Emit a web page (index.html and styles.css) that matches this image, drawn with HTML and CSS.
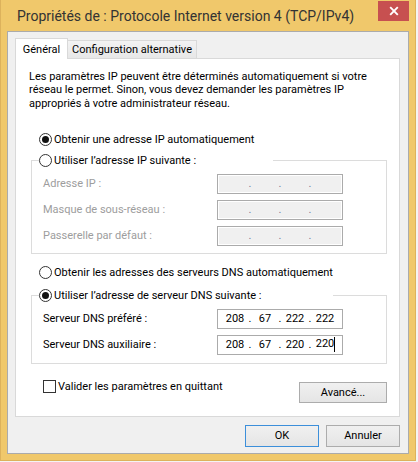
FILE: index.html
```html
<!DOCTYPE html>
<html lang="fr">
<head>
    <meta charset="UTF-8">
    <title>Propriétés de : Protocole Internet version 4 (TCP/IPv4)</title>
    <link rel="stylesheet" href="styles.css">
</head>
<body>

<div class="window">
    <div class="titlebar">
        <span class="title">Propriétés de : Protocole Internet version 4 (TCP/IPv4)</span>
        <button class="close-btn" aria-label="Fermer">
            <svg width="10" height="10" viewBox="0 0 10 10">
                <path d="M1.2 1.2 L8.8 8.8 M8.8 1.2 L1.2 8.8" stroke="#fff" stroke-width="1.9" fill="none"/>
            </svg>
        </button>
    </div>

    <div class="client">
        <div class="tabs">
            <div class="tab active">Général</div>
            <div class="tab">Configuration alternative</div>
        </div>

        <div class="tab-panel">
            <p class="intro">
                Les paramètres IP peuvent être déterminés automatiquement si votre<br>
                réseau le permet. Sinon, vous devez demander les paramètres IP<br>
                appropriés à votre administrateur réseau.
            </p>

            <label class="radio checked standalone first"><span class="radio-mark"></span>Obtenir une adresse IP automatiquement</label>

            <!-- adresse IP manuelle (désactivée) -->
            <fieldset class="group group-ip">
                <legend class="legend-ip"><label class="radio"><span class="radio-mark"></span>Utiliser l’adresse IP suivante :</label></legend>
                <div class="field-grid">
                    <span class="field-label disabled">Adresse IP :</span>
                    <div class="ip-box disabled">
                        <span class="seg"></span><span class="dot">.</span><span class="seg"></span><span class="dot">.</span><span class="seg"></span><span class="dot">.</span><span class="seg"></span>
                    </div>
                    <span class="field-label disabled">Masque de sous-réseau :</span>
                    <div class="ip-box disabled">
                        <span class="seg"></span><span class="dot">.</span><span class="seg"></span><span class="dot">.</span><span class="seg"></span><span class="dot">.</span><span class="seg"></span>
                    </div>
                    <span class="field-label disabled">Passerelle par défaut :</span>
                    <div class="ip-box disabled">
                        <span class="seg"></span><span class="dot">.</span><span class="seg"></span><span class="dot">.</span><span class="seg"></span><span class="dot">.</span><span class="seg"></span>
                    </div>
                </div>
            </fieldset>

            <label class="radio standalone dns-auto"><span class="radio-mark"></span>Obtenir les adresses des serveurs DNS automatiquement</label>

            <fieldset class="group group-dns">
                <legend class="legend-dns"><label class="radio checked"><span class="radio-mark"></span>Utiliser l’adresse de serveur DNS suivante :</label></legend>
                <div class="field-grid">
                    <span class="field-label">Serveur DNS préféré :</span>
                    <div class="ip-box">
                        <span class="seg">208</span><span class="dot">.</span><span class="seg">67</span><span class="dot">.</span><span class="seg">222</span><span class="dot">.</span><span class="seg">222</span>
                    </div>
                    <span class="field-label">Serveur DNS auxiliaire :</span>
                    <div class="ip-box">
                        <span class="seg">208</span><span class="dot">.</span><span class="seg">67</span><span class="dot">.</span><span class="seg">220</span><span class="dot">.</span><span class="seg">220<span class="caret"></span></span>
                    </div>
                </div>
            </fieldset>

            <div class="bottom-row">
                <label class="checkbox"><span class="check-mark"></span>Valider les paramètres en quittant</label>
                <button class="btn btn-advanced">Avancé...</button>
            </div>
        </div>

        <div class="dialog-buttons">
            <button class="btn btn-default">OK</button>
            <button class="btn">Annuler</button>
        </div>
    </div>
</div>

</body>
</html>
```

FILE: styles.css
```css
body {
    margin: 0;
    background-color: #f4f4f4;
    font-family: Roboto, "Noto Sans", sans-serif;
    font-size: 11px;
    color: #000;
}

.window {
    width: 416px;
    height: 461px;
    box-sizing: border-box;
    background-color: #f0c86b;
    border: 1px solid #ddb25c;
    border-top: 0;
    padding: 0 6px 6px;
    display: flex;
    flex-direction: column;
}

/* barre de titre */
.titlebar {
    height: 31px;
    display: flex;
    align-items: flex-start;
}

.title {
    flex: 1;
    padding: 8px 0 0 10px;
    font-size: 14px;
    line-height: 17px;
    color: #333;
    white-space: nowrap;
}

.close-btn {
    width: 31px;
    height: 20px;
    margin-top: 1px;
    padding: 0;
    border: none;
    background-color: #c75050;
    display: flex;
    align-items: center;
    justify-content: center;
}

.client {
    flex: 1;
    background-color: #f0f0f0;
    border: 1px solid #ababab;
    padding: 6px 8px 6px 7px;
    display: flex;
    flex-direction: column;
}

/* onglets */
.tabs {
    height: 20px;
    display: flex;
    align-items: flex-end;
}

.tab {
    width: 130px;
    height: 18px;
    box-sizing: border-box;
    margin-left: -1px;
    border: 1px solid #d9d9d9;
    border-bottom: none;
    background: linear-gradient(#f3f3f3, #e7e7e7);
    display: flex;
    align-items: center;
    justify-content: center;
    white-space: nowrap;
}

.tab.active {
    width: 53px;
    height: 21px;
    margin-left: 0;
    margin-bottom: -1px;
    background: #fff;
    position: relative;
    z-index: 1;
}

.tab-panel {
    background-color: #fff;
    border: 1px solid #d9d9d9;
    padding: 11px 12px 13px 13px;
    display: flex;
    flex-direction: column;
}

.intro {
    margin: 0;
    line-height: 13.3px;
    white-space: nowrap;
}

/* boutons radio et case à cocher */
.radio, .checkbox {
    height: 16px;
    display: flex;
    align-items: center;
    gap: 2px;
    white-space: nowrap;
}

.radio.standalone {
    margin-left: 10px;
    align-self: flex-start;
}

.radio.first {
    margin-top: 22px;
}

.radio.dns-auto {
    margin-top: 11px;
}

.radio-mark {
    width: 13px;
    height: 13px;
    box-sizing: border-box;
    border: 1px solid #333;
    border-radius: 50%;
    background-color: #fff;
    display: flex;
    align-items: center;
    justify-content: center;
}

.radio.checked .radio-mark::after {
    content: "";
    width: 7px;
    height: 7px;
    border-radius: 50%;
    background-color: #111;
}

.check-mark {
    width: 13px;
    height: 13px;
    box-sizing: border-box;
    border: 1px solid #333;
    background-color: #fff;
}

/* groupes */
.group {
    margin: 0 0 0 2px;
    padding: 0 0 7px;
    border: 1px solid #dcdcdc;
    min-width: 0;
}

.group-ip {
    margin-top: 5px;
}

.group-dns {
    margin-top: 7px;
    padding-bottom: 8px;
}

.group legend {
    padding: 0;
    margin-left: 7px;
    background-color: #fff;
}

.legend-ip {
    width: 234px;
}

.legend-dns {
    width: 294px;
}

.field-grid {
    display: grid;
    grid-template-columns: 174px 126px;
    row-gap: 6px;
    align-items: center;
    margin-top: 5px;
    padding-left: 11px;
}

.field-label {
    white-space: nowrap;
}

.disabled {
    color: #9d9d9d;
}

.ip-box {
    height: 20px;
    box-sizing: border-box;
    border: 1px solid #ababab;
    background-color: #fff;
    padding-left: 5px;
    display: flex;
    align-items: center;
    color: #000;
}

.ip-box.disabled {
    background-color: #f0f0f0;
    box-shadow: inset 0 0 0 1px #fff;
    color: #7a7a9a;
}

.seg {
    width: 24px;
    text-align: center;
}

.dot {
    width: 6px;
    text-align: center;
}

.caret {
    display: inline-block;
    width: 1px;
    height: 15px;
    margin-right: -1px;
    background-color: #000;
    vertical-align: middle;
}

.bottom-row {
    margin-top: 15px;
    display: flex;
    justify-content: space-between;
    align-items: flex-start;
    padding-left: 14px;
}

/* boutons */
.btn {
    width: 74px;
    height: 22px;
    padding: 0;
    border: 1px solid #acacac;
    background: linear-gradient(#f0f0f0, #e5e5e5);
    font: inherit;
    color: #000;
}

.btn-advanced {
    width: 88px;
    height: 21px;
    margin-top: 3px;
}

.btn-default {
    border-color: #3c8fda;
}

.dialog-buttons {
    margin-top: 8px;
    display: flex;
    justify-content: flex-end;
    gap: 7px;
}
```
